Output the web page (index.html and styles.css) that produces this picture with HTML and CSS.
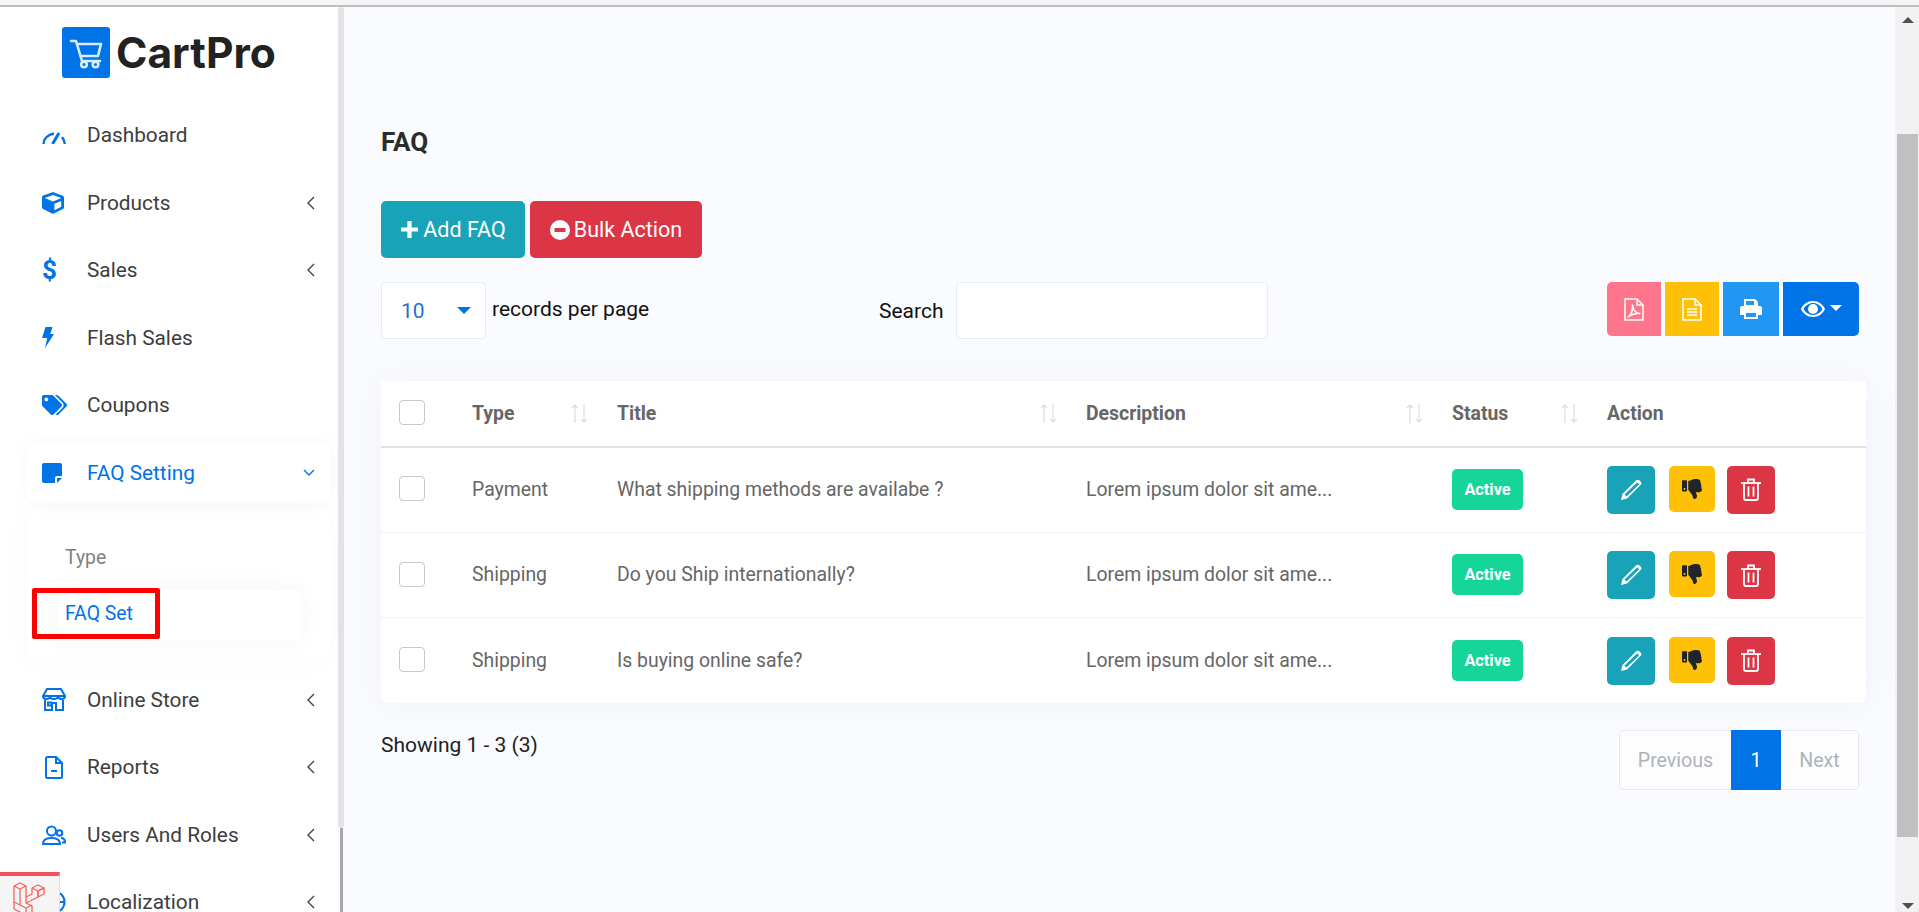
FILE: index.html
```html
<!DOCTYPE html>
<html lang="en">
<head>
    <meta charset="UTF-8">
    <meta name="viewport" content="width=device-width, initial-scale=1.0">
    <title>FAQ Set</title>
    <link rel="stylesheet" href="styles.css">
</head>
<body>
    <div class="top-strip"></div>
    <div class="app">
        <aside class="sidebar">
            <div class="brand">
                <span class="brand-mark">
                    <svg viewBox="0 0 48 51" width="48" height="51" fill="none" stroke="#d6ecff" stroke-width="2.6" stroke-linecap="round" stroke-linejoin="round">
                        <path d="M9 14h5l6 20h18"/>
                        <path d="M15 17h24l-3 12H19"/>
                        <circle cx="22" cy="37.500" r="2.800"/>
                        <circle cx="33.500" cy="37.500" r="2.800"/>
                    </svg>
                </span>
                <span class="brand-name">CartPro</span>
            </div>
            <nav class="menu">
                <a class="menu-link">
                    <span class="menu-icon gauge">
                        <svg viewBox="0 0 24 12" width="24" height="12" fill="none" stroke="currentColor" stroke-width="2.400"><path d="M1.500 12C1.500 7 5.500 2.500 12 1.500"/><path d="M10.500 12L17 1" stroke-width="3"/><path d="M20 5c1.500 2 2.500 4 2.800 7"/></svg>
                    </span>
                    <span class="menu-text">Dashboard</span>
                </a>
                <a class="menu-link">
                    <span class="menu-icon">
                        <svg viewBox="0 0 512 512" width="22" height="22" fill="currentColor"><path d="M239.1 6.3l-208 78c-18.7 7-31.1 25-31.1 45v225.1c0 18.2 10.3 34.8 26.5 42.9l208 104c13.5 6.8 29.4 6.8 42.9 0l208-104c16.3-8.1 26.5-24.8 26.5-42.9V129.3c0-20-12.4-37.9-31.1-44.9l-208-78C262 2.2 250 2.2 239.1 6.3zM256 68.4l192 72v1.1l-192 78-192-78v-1.1l192-72zm32 356V275.500l160-65v133.900l-160 80z"/></svg>
                    </span>
                    <span class="menu-text">Products</span>
                    <svg class="chev" viewBox="0 0 8 14" width="8" height="14"><path d="M7 1L1 7l6 6"/></svg>
                </a>
                <a class="menu-link">
                    <span class="menu-icon dollar">$</span>
                    <span class="menu-text">Sales</span>
                    <svg class="chev" viewBox="0 0 8 14" width="8" height="14"><path d="M7 1L1 7l6 6"/></svg>
                </a>
                <a class="menu-link">
                    <span class="menu-icon">
                        <svg viewBox="0 0 12 21" width="12" height="21" fill="currentColor"><path d="M3.500 0h7L8.300 7H12L3 21l2.200-10H0z"/></svg>
                    </span>
                    <span class="menu-text">Flash Sales</span>
                </a>
                <a class="menu-link">
                    <span class="menu-icon">
                        <svg viewBox="0 0 640 512" width="25" height="20" fill="currentColor"><path d="M497.941 225.941L286.059 14.059A48 48 0 0 0 252.118 0H48C21.49 0 0 21.49 0 48v204.118a48 48 0 0 0 14.059 33.941l211.882 211.882c18.744 18.745 49.136 18.746 67.882 0l204.118-204.118c18.745-18.745 18.745-49.137 0-67.882zM112 160c-26.51 0-48-21.49-48-48s21.49-48 48-48 48 21.49 48 48-21.49 48-48 48zm513.941 133.823L421.823 497.941c-18.745 18.745-49.137 18.745-67.882 0l-.36-.36L527.64 323.522c16.999-16.999 26.36-39.6 26.36-63.64s-9.362-46.641-26.36-63.64L331.397 0h48.721a48 48 0 0 1 33.941 14.059l211.882 211.882c18.745 18.745 18.745 49.137 0 67.882z"/></svg>
                    </span>
                    <span class="menu-text">Coupons</span>
                </a>
                <a class="menu-link active">
                    <span class="menu-icon">
                        <svg viewBox="0 0 20 20" width="20" height="20" fill="currentColor"><path d="M2 0h16a2 2 0 0 1 2 2v11h-5a2 2 0 0 0-2 2v5H2a2 2 0 0 1-2-2V2a2 2 0 0 1 2-2z"/><path d="M15 15h5l-5 5z"/></svg>
                    </span>
                    <span class="menu-text">FAQ Setting</span>
                    <svg class="chev chev-down" viewBox="0 0 12 8" width="12" height="8"><path d="M1 1l5 5 5-5"/></svg>
                </a>
                <div class="submenu">
                    <a class="sub-link">Type</a>
                    <a class="sub-link current">FAQ Set<span class="highlight"></span></a>
                </div>
                <a class="menu-link">
                    <span class="menu-icon">
                        <svg viewBox="0 0 24 23" width="24" height="23" fill="none" stroke="currentColor" stroke-width="2"><path d="M5 1h14l4 7H1z"/><path d="M1 8c0 4 7 4 7 0 0 4 8 4 8 0 0 4 7 4 7 0"/><path d="M3 12v10h7v-7h4v7h7V12"/><rect x="6" y="14.500" width="3.500" height="3"/></svg>
                    </span>
                    <span class="menu-text">Online Store</span>
                    <svg class="chev" viewBox="0 0 8 14" width="8" height="14"><path d="M7 1L1 7l6 6"/></svg>
                </a>
                <a class="menu-link">
                    <span class="menu-icon report">
                        <svg viewBox="0 0 18 23" width="18" height="23" fill="none" stroke="currentColor" stroke-width="2"><path d="M2.500 1H11l6 6v13.500a1.500 1.500 0 0 1-1.500 1.500h-13A1.500 1.500 0 0 1 1 20.500v-18A1.500 1.500 0 0 1 2.500 1z"/><path d="M11 1v6h6"/><path d="M6 15h6"/></svg>
                    </span>
                    <span class="menu-text">Reports</span>
                    <svg class="chev" viewBox="0 0 8 14" width="8" height="14"><path d="M7 1L1 7l6 6"/></svg>
                </a>
                <a class="menu-link">
                    <span class="menu-icon">
                        <svg viewBox="0 0 24 20" width="24" height="20" fill="none" stroke="currentColor" stroke-width="2"><circle cx="9.500" cy="6" r="4.500"/><path d="M1 19c0-4 3-6 8.500-6s8.500 2 8.500 6z"/><circle cx="17.500" cy="8" r="2.800"/><path d="M19 13c2.500 0 4 1.500 4 4.500h-3"/></svg>
                    </span>
                    <span class="menu-text">Users And Roles</span>
                    <svg class="chev" viewBox="0 0 8 14" width="8" height="14"><path d="M7 1L1 7l6 6"/></svg>
                </a>
                <a class="menu-link">
                    <span class="menu-icon">
                        <svg viewBox="0 0 24 24" width="24" height="24" fill="none" stroke="currentColor" stroke-width="2"><circle cx="12" cy="12" r="10.500"/><ellipse cx="12" cy="12" rx="4.500" ry="10.500"/><path d="M2 12h20"/></svg>
                    </span>
                    <span class="menu-text">Localization</span>
                    <svg class="chev" viewBox="0 0 8 14" width="8" height="14"><path d="M7 1L1 7l6 6"/></svg>
                </a>
            </nav>
        </aside>
        <div class="side-scroll"><div class="side-track"></div><div class="side-thumb"></div></div>

        <main class="content">
            <h1 class="page-title">FAQ</h1>
            <div class="action-row">
                <button class="btn btn-teal">
                    <svg viewBox="0 0 18 18" width="19" height="19" fill="#fff"><path d="M7 1h4v6h6v4h-6v6H7v-6H1V7h6z"/></svg>
                    Add FAQ
                </button>
                <button class="btn btn-red">
                    <svg viewBox="0 0 20 20" width="20" height="20"><circle cx="10" cy="10" r="10" fill="#fff"/><rect x="4.500" y="8" width="11" height="4" fill="#dc3545"/></svg>
                    Bulk Action
                </button>
            </div>
            <div class="tools-row">
                <div class="per-page">
                    <div class="select"><span>10</span><i class="caret"></i></div>
                    <span class="per-page-label">records per page</span>
                </div>
                <div class="search">
                    <label for="search">Search</label>
                    <input id="search" type="text">
                </div>
                <div class="exports">
                    <button class="tool tool-pdf">
                        <svg viewBox="0 0 20 23" width="20" height="23" fill="none" stroke="#fff" stroke-width="1.500"><path d="M1 1h12l6 6v15H1z"/><path d="M13 1v6h6"/><path d="M3.500 19.500C7 17 9 12 8.500 6.500 9 12 12 15.500 16.500 15.500 12 15 7.500 16 3.500 19.500z"/></svg>
                    </button>
                    <button class="tool tool-doc">
                        <svg viewBox="0 0 20 23" width="20" height="23" fill="none" stroke="#fff" stroke-width="1.500"><path d="M1 1h12l6 6v15H1z"/><path d="M13 1v6h6"/><path d="M5 11h10M5 14h10M5 17h10"/></svg>
                    </button>
                    <button class="tool tool-print">
                        <svg viewBox="0 0 22 20" width="22" height="20"><path fill="#fff" d="M4 0h11l3 3v5H4z"/><path fill="#2196f3" d="M6 2h8v4H6z"/><path fill="#fff" d="M2 7h18a2 2 0 0 1 2 2v6a1 1 0 0 1-1 1h-3v4H4v-4H1a1 1 0 0 1-1-1V9a2 2 0 0 1 2-2z"/><path fill="#2196f3" d="M6 14h10v4H6z"/></svg>
                    </button>
                    <button class="tool tool-eye">
                        <svg viewBox="0 0 24 16" width="24" height="16"><path fill="#fff" d="M12 0C6.500 0 2 3.500 0 8c2 4.500 6.500 8 12 8s10-3.500 12-8c-2-4.500-6.500-8-12-8zm0 14c-4 0-7.500-2.500-9.500-6C4.500 4.500 8 2 12 2s7.500 2.500 9.500 6c-2 3.500-5.500 6-9.500 6z"/><circle cx="12" cy="8" r="5" fill="#fff"/></svg>
                        <i class="caret caret-white"></i>
                    </button>
                </div>
            </div>

            <div class="table-card">
                <table class="faq-table">
                    <colgroup>
                        <col class="col-check"><col class="col-type"><col class="col-title"><col class="col-desc"><col class="col-status"><col class="col-action">
                    </colgroup>
                    <thead>
                        <tr>
                            <th><span class="check"></span></th>
                            <th><div class="th-inner">Type<svg class="sort" viewBox="0 0 17 19" width="17" height="19"><path d="M4 19V1M1 4l3-3 3 3M13 0v18M10 15l3 3 3-3"/></svg></div></th>
                            <th><div class="th-inner">Title<svg class="sort" viewBox="0 0 17 19" width="17" height="19"><path d="M4 19V1M1 4l3-3 3 3M13 0v18M10 15l3 3 3-3"/></svg></div></th>
                            <th><div class="th-inner">Description<svg class="sort" viewBox="0 0 17 19" width="17" height="19"><path d="M4 19V1M1 4l3-3 3 3M13 0v18M10 15l3 3 3-3"/></svg></div></th>
                            <th><div class="th-inner">Status<svg class="sort" viewBox="0 0 17 19" width="17" height="19"><path d="M4 19V1M1 4l3-3 3 3M13 0v18M10 15l3 3 3-3"/></svg></div></th>
                            <th>Action</th>
                        </tr>
                    </thead>
                    <tbody>
                        <tr>
                            <td><span class="check"></span></td>
                            <td>Payment</td>
                            <td>What shipping methods are availabe ?</td>
                            <td>Lorem ipsum dolor sit ame...</td>
                            <td><span class="badge">Active</span></td>
                            <td>
                                <div class="row-actions">
                                    <button class="act act-edit"><svg viewBox="0 0 22 22" width="22" height="22"><path fill="#fff" d="M16 1.500a2.500 2.500 0 0 1 3.500 0l1 1a2.500 2.500 0 0 1 0 3.500L7 19.500 1 21l1.500-6z"/><path fill="#19a3b8" d="M16.500 4a1 1 0 0 1 1.500 0l.500.500a1 1 0 0 1 0 1.500L6.500 17.500l-2-2z"/></svg></button>
                                    <button class="act act-down"><svg viewBox="0 0 512 512" width="20" height="20"><path fill="#212529" d="M0 56v240c0 13.255 10.745 24 24 24h80c13.255 0 24-10.745 24-24V56c0-13.255-10.745-24-24-24H24C10.745 32 0 42.745 0 56zm40 200c0-13.255 10.745-24 24-24s24 10.745 24 24-10.745 24-24 24-24-10.745-24-24zm272 256c-20.183 0-29.485-39.293-33.931-57.795-5.206-21.666-10.589-44.07-25.393-58.902-32.469-32.524-49.503-73.967-89.117-113.111a11.98 11.98 0 0 1-3.558-8.521V59.901c0-6.541 5.243-11.878 11.783-11.998 15.831-.29 36.694-9.079 52.651-16.178C256.189 17.598 295.709.017 343.995 0h2.844c42.777 0 93.363.413 113.774 29.737 8.392 12.057 10.446 27.034 6.148 44.632 16.312 17.053 25.063 48.863 16.382 74.757 17.544 23.432 19.143 56.132 9.308 79.469l.11.11c11.893 11.949 19.523 31.259 19.439 49.197-.156 30.352-26.157 58.098-59.553 58.098H350.723C358.03 364.34 384 388.132 384 430.548 384 504 336 512 312 512z"/></svg></button>
                                    <button class="act act-trash"><svg viewBox="0 0 20 23" width="20" height="23" fill="none" stroke="#fff" stroke-width="1.800"><path d="M0 5h20"/><path d="M7 5V1.500h6V5"/><path d="M3 5v15a2 2 0 0 0 2 2h10a2 2 0 0 0 2-2V5"/><path d="M7.500 8.500v10M12.500 8.500v10"/></svg></button>
                                </div>
                            </td>
                        </tr>
                        <tr>
                            <td><span class="check"></span></td>
                            <td>Shipping</td>
                            <td>Do you Ship internationally?</td>
                            <td>Lorem ipsum dolor sit ame...</td>
                            <td><span class="badge">Active</span></td>
                            <td>
                                <div class="row-actions">
                                    <button class="act act-edit"><svg viewBox="0 0 22 22" width="22" height="22"><path fill="#fff" d="M16 1.500a2.500 2.500 0 0 1 3.500 0l1 1a2.500 2.500 0 0 1 0 3.500L7 19.500 1 21l1.500-6z"/><path fill="#19a3b8" d="M16.500 4a1 1 0 0 1 1.500 0l.500.500a1 1 0 0 1 0 1.500L6.500 17.500l-2-2z"/></svg></button>
                                    <button class="act act-down"><svg viewBox="0 0 512 512" width="20" height="20"><path fill="#212529" d="M0 56v240c0 13.255 10.745 24 24 24h80c13.255 0 24-10.745 24-24V56c0-13.255-10.745-24-24-24H24C10.745 32 0 42.745 0 56zm40 200c0-13.255 10.745-24 24-24s24 10.745 24 24-10.745 24-24 24-24-10.745-24-24zm272 256c-20.183 0-29.485-39.293-33.931-57.795-5.206-21.666-10.589-44.07-25.393-58.902-32.469-32.524-49.503-73.967-89.117-113.111a11.98 11.98 0 0 1-3.558-8.521V59.901c0-6.541 5.243-11.878 11.783-11.998 15.831-.29 36.694-9.079 52.651-16.178C256.189 17.598 295.709.017 343.995 0h2.844c42.777 0 93.363.413 113.774 29.737 8.392 12.057 10.446 27.034 6.148 44.632 16.312 17.053 25.063 48.863 16.382 74.757 17.544 23.432 19.143 56.132 9.308 79.469l.11.11c11.893 11.949 19.523 31.259 19.439 49.197-.156 30.352-26.157 58.098-59.553 58.098H350.723C358.03 364.34 384 388.132 384 430.548 384 504 336 512 312 512z"/></svg></button>
                                    <button class="act act-trash"><svg viewBox="0 0 20 23" width="20" height="23" fill="none" stroke="#fff" stroke-width="1.800"><path d="M0 5h20"/><path d="M7 5V1.500h6V5"/><path d="M3 5v15a2 2 0 0 0 2 2h10a2 2 0 0 0 2-2V5"/><path d="M7.500 8.500v10M12.500 8.500v10"/></svg></button>
                                </div>
                            </td>
                        </tr>
                        <tr>
                            <td><span class="check"></span></td>
                            <td>Shipping</td>
                            <td>Is buying online safe?</td>
                            <td>Lorem ipsum dolor sit ame...</td>
                            <td><span class="badge">Active</span></td>
                            <td>
                                <div class="row-actions">
                                    <button class="act act-edit"><svg viewBox="0 0 22 22" width="22" height="22"><path fill="#fff" d="M16 1.500a2.500 2.500 0 0 1 3.500 0l1 1a2.500 2.500 0 0 1 0 3.500L7 19.500 1 21l1.500-6z"/><path fill="#19a3b8" d="M16.500 4a1 1 0 0 1 1.500 0l.500.500a1 1 0 0 1 0 1.500L6.500 17.500l-2-2z"/></svg></button>
                                    <button class="act act-down"><svg viewBox="0 0 512 512" width="20" height="20"><path fill="#212529" d="M0 56v240c0 13.255 10.745 24 24 24h80c13.255 0 24-10.745 24-24V56c0-13.255-10.745-24-24-24H24C10.745 32 0 42.745 0 56zm40 200c0-13.255 10.745-24 24-24s24 10.745 24 24-10.745 24-24 24-24-10.745-24-24zm272 256c-20.183 0-29.485-39.293-33.931-57.795-5.206-21.666-10.589-44.07-25.393-58.902-32.469-32.524-49.503-73.967-89.117-113.111a11.98 11.98 0 0 1-3.558-8.521V59.901c0-6.541 5.243-11.878 11.783-11.998 15.831-.29 36.694-9.079 52.651-16.178C256.189 17.598 295.709.017 343.995 0h2.844c42.777 0 93.363.413 113.774 29.737 8.392 12.057 10.446 27.034 6.148 44.632 16.312 17.053 25.063 48.863 16.382 74.757 17.544 23.432 19.143 56.132 9.308 79.469l.11.11c11.893 11.949 19.523 31.259 19.439 49.197-.156 30.352-26.157 58.098-59.553 58.098H350.723C358.03 364.34 384 388.132 384 430.548 384 504 336 512 312 512z"/></svg></button>
                                    <button class="act act-trash"><svg viewBox="0 0 20 23" width="20" height="23" fill="none" stroke="#fff" stroke-width="1.800"><path d="M0 5h20"/><path d="M7 5V1.500h6V5"/><path d="M3 5v15a2 2 0 0 0 2 2h10a2 2 0 0 0 2-2V5"/><path d="M7.500 8.500v10M12.500 8.500v10"/></svg></button>
                                </div>
                            </td>
                        </tr>
                    </tbody>
                </table>
            </div>

            <div class="table-foot">
                <span class="showing">Showing 1 - 3 (3)</span>
                <div class="pager">
                    <span class="page-prev">Previous</span>
                    <span class="page-num">1</span>
                    <span class="page-next">Next</span>
                </div>
            </div>
        </main>

        <div class="page-scroll">
            <span class="arrow arrow-up"></span>
            <div class="page-thumb"></div>
            <span class="arrow arrow-down"></span>
        </div>
    </div>

    <div class="debug-tab">
        <svg viewBox="0 0 34 34" width="34" height="34" fill="none" stroke="#f4645f" stroke-width="1.300" stroke-linejoin="round">
            <path d="M1 4l6-3 6 3v17l6 3v6l-6 3-12-6z"/>
            <path d="M1 4l6 3 6-3M7 7v16l6 3 6-3M7 23l-6-3M13 26v7"/>
            <path d="M13 21l12-6V9l6-3-6-3-6 3v6l-6 3"/>
            <path d="M19 6l6 3 6-3v6l-6 3M25 9v6"/>
        </svg>
    </div>
</body>
</html>
```

FILE: styles.css
```css
* {
    box-sizing: border-box;
}
html, body {
    margin: 0;
    padding: 0;
    height: 100%;
    overflow: hidden;
}
body {
    font-family: Roboto, "Liberation Sans", sans-serif;
    background: #fafbff;
    display: flex;
    flex-direction: column;
}
button {
    font-family: inherit;
    border: none;
    cursor: pointer;
}

/* strip above the page */
.top-strip {
    height: 7px;
    flex: none;
    background: #f5f5f5;
    border-bottom: 2px solid #bdbdbd;
}
.app {
    flex: 1;
    display: flex;
    min-height: 0;
}

/* sidebar */
.sidebar {
    width: 338px;
    flex: none;
    background: #fff;
    overflow: hidden;
}
.brand {
    height: 98px;
    display: flex;
    align-items: flex-start;
    gap: 6px;
    padding: 20px 0 0 62px;
}
.brand-mark {
    width: 48px;
    height: 51px;
    background: #0073e6;
    border-radius: 3px;
}
.brand-mark svg {
    display: block;
}
.brand-name {
    font-family: Inter, sans-serif;
    font-weight: 700;
    font-size: 42.5px;
    line-height: 51px;
    color: #222;
}
.menu {
    display: flex;
    flex-direction: column;
    gap: 7.5px;
    padding: 0 8px 0 27px;
}
.menu-link {
    height: 60px;
    flex: none;
    display: flex;
    align-items: center;
    padding: 0 15px 0 15px;
    border-radius: 8px;
    color: #3d3d3d;
    font-size: 20.8px;
}
.menu-icon {
    width: 46px;
    margin-right: -1px;
    flex: none;
    color: #0073e6;
    display: flex;
    align-items: center;
}
.gauge {
    padding-top: 5px;
}
.report {
    padding-left: 3px;
}
.dollar {
    font-size: 26px;
    font-weight: 700;
    line-height: 1;
}
.menu-text {
    flex: 1;
}
.chev {
    fill: none;
    stroke: #444;
    stroke-width: 1.400;
}
.chev-down {
    stroke: #0073e6;
}
.menu-link.active {
    background: #fff;
    color: #0073e6;
    box-shadow: 0 0 20px rgba(40, 50, 90, 0.04);
}
.submenu {
    display: flex;
    flex-direction: column;
    gap: 8px;
    padding: 22px 30px;
    border-radius: 8px;
    box-shadow: 0 0 30px rgba(40, 50, 90, 0.025);
}
.sub-link {
    position: relative;
    height: 50px;
    display: flex;
    align-items: center;
    padding-left: 8px;
    font-size: 19.4px;
    color: #808080;
    border-radius: 8px;
}
.sub-link.current {
    padding-bottom: 3px;
    color: #0073e6;
    background: #fff;
    box-shadow: 0 0 24px rgba(40, 50, 90, 0.05);
}
.highlight {
    position: absolute;
    left: -25px;
    top: -2px;
    width: 128px;
    height: 51px;
    border: 5px solid #f00;
    border-radius: 2px;
}

/* the sidebar's own thin scrollbar */
.side-scroll {
    width: 6px;
    flex: none;
    display: flex;
    flex-direction: column;
    background: #fafbff;
}
.side-track {
    flex: 1;
    background: #e3e3e3;
    border-radius: 4px;
}
.side-thumb {
    height: 84px;
    margin-left: 2px;
    width: 3px;
    background: #a8a8a8;
}

/* main column */
.content {
    flex: 1;
    min-width: 0;
    padding: 117px 36px 0 37px;
}
.page-title {
    margin: 0;
    font-size: 26px;
    line-height: 36px;
    font-weight: 700;
    color: #2b2b2b;
}
.action-row {
    display: flex;
    gap: 5px;
    margin-top: 41px;
}
.btn {
    height: 57px;
    display: flex;
    align-items: center;
    justify-content: center;
    gap: 4px;
    color: #fff;
    font-size: 21.5px;
    border-radius: 5px;
}
.btn-teal {
    width: 144px;
    background: #19a3b8;
}
.btn-red {
    width: 172px;
    background: #dc3545;
}
.tools-row {
    display: flex;
    align-items: flex-start;
    margin-top: 24px;
    height: 57px;
}
.per-page {
    width: 498px;
    display: flex;
    align-items: center;
    gap: 6px;
}
.select {
    width: 105px;
    height: 57px;
    padding: 0 14px 0 19px;
    display: flex;
    align-items: center;
    justify-content: space-between;
    background: #fff;
    border: 1px solid #e6eafa;
    border-radius: 5px;
    color: #2a6fd6;
    font-size: 21px;
}
.caret {
    width: 0;
    height: 0;
    border-left: 7px solid transparent;
    border-right: 7px solid transparent;
    border-top: 7px solid #0073e6;
}
.caret-white {
    border-left-width: 6px;
    border-right-width: 6px;
    border-top: 6px solid #fff;
    margin-bottom: 3px;
}
.per-page-label {
    font-size: 21px;
    color: #111;
    padding-bottom: 4px;
}
.search {
    display: flex;
    align-items: center;
    gap: 12px;
    font-size: 21px;
    color: #111;
}
.search input {
    width: 312px;
    height: 57px;
    background: #fff;
    border: 1px solid #e6eafa;
    border-radius: 5px;
    outline: none;
}
.exports {
    margin-left: auto;
    display: flex;
    gap: 4px;
}
.tool {
    height: 54px;
    display: flex;
    align-items: center;
    justify-content: center;
    gap: 5px;
}
.tool-pdf {
    width: 54px;
    background: #ff758c;
    border-radius: 5px 0 0 5px;
}
.tool-doc {
    width: 54px;
    background: #ffc107;
}
.tool-print {
    width: 56px;
    background: #2196f3;
}
.tool-eye {
    width: 76px;
    background: #0073e6;
    border-radius: 0 5px 5px 0;
}

/* table */
.table-card {
    margin: 42px -7px 0 0;
    background: #fff;
    border-radius: 0 0 8px 8px;
    box-shadow: 0 0 40px rgba(40, 50, 90, 0.05);
}
.faq-table {
    width: 100%;
    table-layout: fixed;
    border-collapse: collapse;
    color: #666;
    font-size: 19.4px;
}
.col-check { width: 73px; }
.col-type { width: 145px; }
.col-title { width: 469px; }
.col-desc { width: 366px; }
.col-status { width: 155px; }
.col-action { width: 277px; }
.faq-table th {
    height: 66px;
    padding: 0 18px 1px;
    text-align: left;
    font-weight: 700;
    border-bottom: 2px solid #dfe3e8;
}
.faq-table td {
    height: 85.4px;
    padding: 0 18px 1px;
    border-bottom: 1px solid #f1f2f4;
}
.faq-table tbody tr:last-child td {
    border-bottom: none;
}
.th-inner {
    display: flex;
    align-items: center;
    justify-content: space-between;
}
.sort {
    fill: none;
    stroke: #dcdcdc;
    stroke-width: 1.200;
    margin-right: -7px;
}
.check {
    display: block;
    width: 26px;
    height: 25px;
    margin-bottom: 1px;
    border: 1px solid #c8c8c8;
    border-radius: 4px;
    background: #fff;
}
.badge {
    display: inline-flex;
    align-items: center;
    justify-content: center;
    width: 71px;
    height: 41px;
    background: #16d598;
    border-radius: 5px;
    color: #fff;
    font-size: 16.3px;
    font-weight: 700;
}
.row-actions {
    display: flex;
    align-items: flex-start;
    gap: 14px;
    margin-top: 1px;
}
.act {
    width: 48px;
    height: 48px;
    padding: 0;
    display: flex;
    align-items: center;
    justify-content: center;
    border-radius: 5px;
}
.act-edit {
    background: #19a3b8;
}
.act-down {
    width: 46px;
    height: 46px;
    margin-right: -2px;
    background: #ffc107;
}
.act-trash {
    background: #dc3545;
}

/* footer of the table */
.table-foot {
    display: flex;
    align-items: flex-start;
    justify-content: space-between;
    margin-top: 27px;
}
.showing {
    font-size: 21px;
    color: #222;
    line-height: 30px;
}
.pager {
    display: flex;
    height: 60px;
    font-size: 19.6px;
    color: #adb3bd;
    border: 1px solid #e6e8ee;
    border-radius: 5px;
    background: #fdfdfe;
}
.pager span {
    display: flex;
    align-items: center;
    justify-content: center;
}
.page-prev {
    width: 111px;
}
.page-num {
    width: 50px;
    margin: -1px 0;
    background: #0073e6;
    color: #fff;
}
.page-next {
    width: 77px;
}

/* browser scrollbar */
.page-scroll {
    width: 24px;
    flex: none;
    background: #f1f1f1;
    display: flex;
    flex-direction: column;
    align-items: center;
    padding: 0 1px 0 2px;
}
.arrow {
    width: 0;
    height: 0;
    flex: none;
    border-left: 6px solid transparent;
    border-right: 6px solid transparent;
}
.arrow-up {
    margin: 10px 0 111px;
    border-bottom: 6px solid #505050;
}
.arrow-down {
    margin: 66px 0 3px;
    border-top: 6px solid #505050;
}
.page-thumb {
    flex: 1;
    width: 100%;
    background: #c0c0c0;
}

/* debug bar tab, sits over the sidebar */
.debug-tab {
    position: absolute;
    left: 0;
    bottom: 0;
    width: 60px;
    height: 40px;
    padding: 6px 0 0 13px;
    background: #f5f5f5;
    border-top: 4px solid #f4505e;
    border-right: 1px solid #ddd;
}
```
